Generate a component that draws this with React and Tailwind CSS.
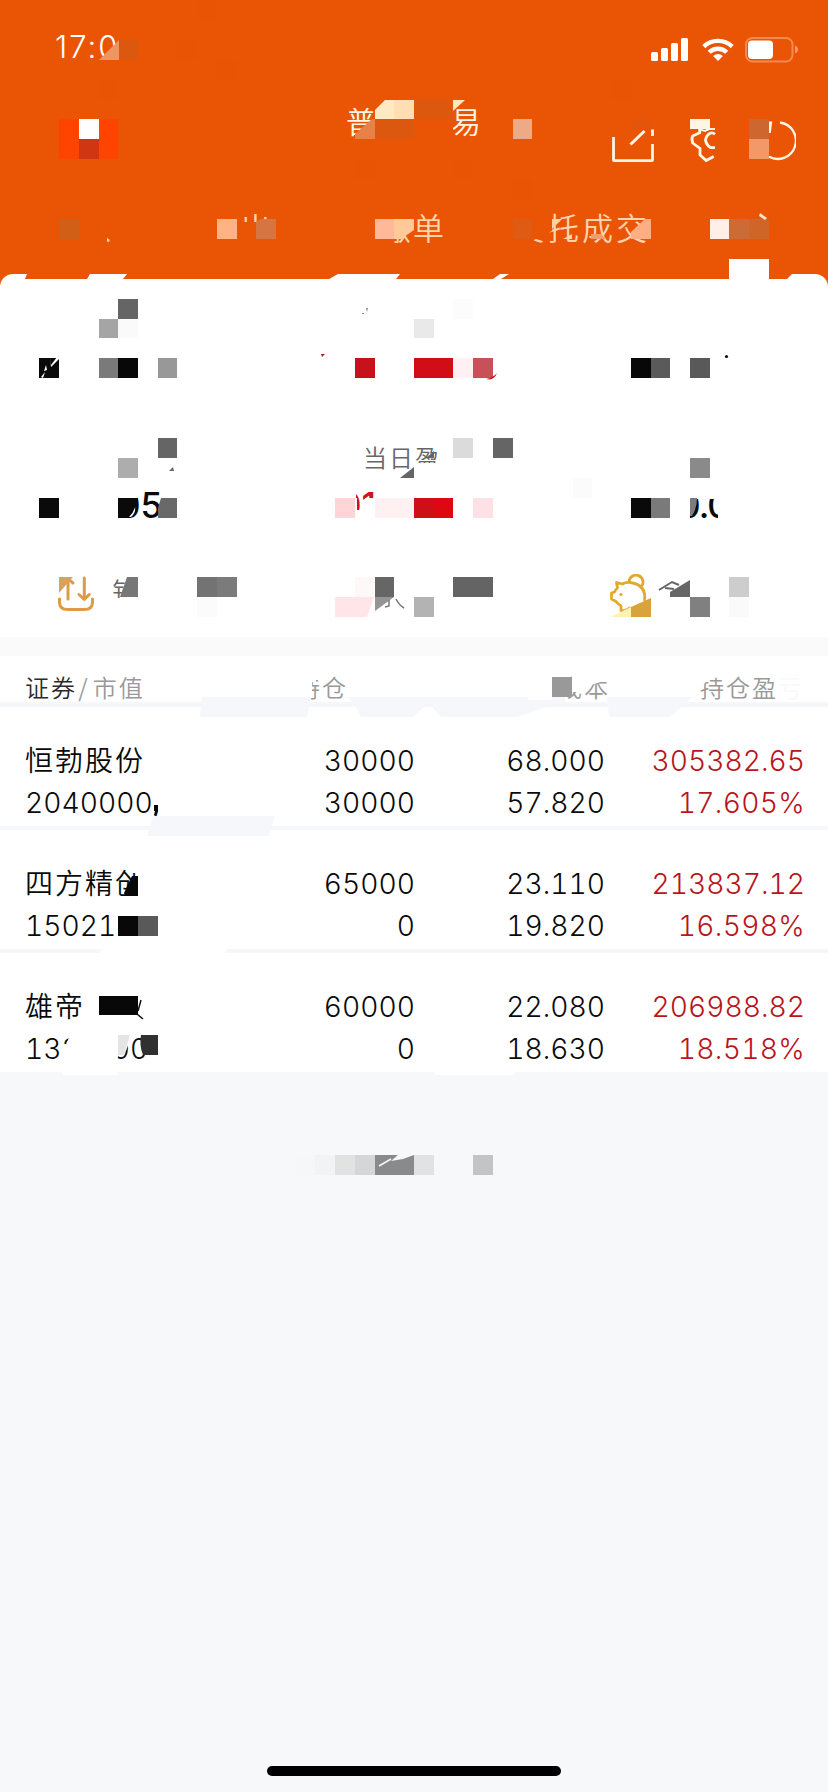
import React from "react";

const holdings = [
  {
    name: "恒勃股份",
    value: "2040000,",
    amount: "30000",
    available: "30000",
    price: "68.000",
    cost: "57.820",
    profit: "305382.65",
    rate: "17.605%",
  },
  {
    name: "四方精创",
    value: "15021",
    amount: "65000",
    available: "0",
    price: "23.110",
    cost: "19.820",
    profit: "213837.12",
    rate: "16.598%",
  },
  {
    name: "雄帝",
    value: "132",
    valueTail: "00",
    amount: "60000",
    available: "0",
    price: "22.080",
    cost: "18.630",
    profit: "206988.82",
    rate: "18.518%",
  },
];

// Privacy tiles: [x, y, width, height, color]
const headerTiles = [
  [197, 0, 20, 20, "#e85404"],
  [177, 40, 20, 20, "#e85404"],
  [118, 40, 20, 20, "#dc580f"],
  [217, 60, 20, 20, "#e85404"],
  [99, 80, 19, 20, "#e85404"],
  [611, 80, 20, 20, "#e85404"],
  [453, 159, 20, 20, "#e85404"],
  [355, 159, 20, 20, "#e85404"],
  [513, 179, 20, 20, "#e85404"],
  [375, 119, 78, 20, "#e95504"],
  [375, 119, 39, 20, "#dc580f"],
  [414, 100, 39, 19, "#dc580f"],
  [394, 100, 20, 19, "#ffdeb4"],
  [59, 119, 59, 40, "#ff4300"],
  [79, 119, 20, 20, "#fffefd"],
  [79, 139, 20, 20, "#d13612"],
  [513, 119, 19, 20, "#eeaa87"],
  [631, 119, 20, 11, "#e4540a"],
  [690, 119, 20, 10, "#fff5e5"],
  [749, 119, 20, 20, "#cd672f"],
  [749, 139, 20, 20, "#f29967"],
  [217, 219, 20, 20, "#ffb384"],
  [375, 219, 19, 20, "#ffb899"],
  [710, 219, 19, 20, "#ffefe6"],
  [729, 219, 20, 20, "#cb6c37"],
  [749, 219, 20, 20, "#cf6529"],
  [729, 259, 40, 20, "#ffffff"],
];

const summaryTiles = [
  [118, 299, 20, 20, "#656565"],
  [99, 319, 19, 19, "#a5a5a5"],
  [118, 319, 20, 19, "#fafafa"],
  [453, 299, 20, 20, "#fcfcfc"],
  [414, 319, 20, 19, "#e9e9e9"],
  [39, 358, 20, 20, "#0a0a0a"],
  [99, 358, 19, 20, "#7a7a7a"],
  [118, 358, 20, 20, "#080808"],
  [158, 358, 19, 20, "#989898"],
  [355, 358, 20, 20, "#c6121b"],
  [414, 358, 39, 20, "#d10d17"],
  [453, 358, 20, 20, "#fff0f3"],
  [473, 358, 20, 20, "#c85058"],
  [631, 358, 20, 20, "#080808"],
  [651, 358, 19, 20, "#5a5a5a"],
  [690, 358, 20, 20, "#595959"],
  [158, 438, 19, 20, "#656565"],
  [118, 458, 20, 20, "#adadad"],
  [453, 438, 20, 20, "#dbdbdb"],
  [493, 438, 20, 20, "#656565"],
  [690, 458, 20, 20, "#8a8a8a"],
  [573, 478, 19, 20, "#fbfbfb"],
  [39, 498, 20, 20, "#0a0a0a"],
  [335, 498, 20, 20, "#ffd5d7"],
  [375, 498, 39, 20, "#fff0f2"],
  [414, 498, 20, 20, "#ce0f18"],
  [434, 498, 19, 20, "#dd0811"],
  [473, 498, 20, 20, "#fee1e4"],
  [631, 498, 20, 20, "#0a0a0a"],
  [651, 498, 19, 20, "#7a7a7a"],
  [197, 577, 20, 20, "#737373"],
  [217, 577, 20, 20, "#7b7b7b"],
  [197, 597, 20, 20, "#fbfbfb"],
  [355, 577, 20, 20, "#fff8f8"],
  [375, 577, 19, 20, "#666666"],
  [453, 577, 40, 20, "#646464"],
  [414, 597, 20, 20, "#b3b3b3"],
  [690, 597, 20, 20, "#808080"],
  [729, 577, 20, 20, "#cdcdcd"],
  [729, 597, 20, 20, "#fafafa"],
];

const holdingTiles = [
  [552, 677, 20, 20, "#999999"],
  [118, 916, 20, 20, "#080808"],
  [138, 916, 20, 20, "#595959"],
  [99, 996, 39, 19, "#080808"],
];

const footerTiles = [
  [296, 1155, 19, 20, "#f6f7f8"],
  [315, 1155, 20, 20, "#f2f3f4"],
  [335, 1155, 20, 20, "#e1e3e2"],
  [355, 1155, 20, 20, "#d5d6d8"],
  [375, 1155, 39, 20, "#8a8a8a"],
  [414, 1155, 20, 20, "#e1e2e3"],
  [473, 1155, 20, 20, "#c3c4c5"],
];

function Mosaic({ top, height, tiles, children }) {
  return (
    <svg
      className="absolute inset-0 pointer-events-none"
      width="828"
      height={height}
      viewBox={`0 ${top} 828 ${height}`}
    >
      {tiles.map(([x, y, w, h, color]) => (
        <rect key={`${x}-${y}-${w}-${color}`} x={x} y={y} width={w} height={h} fill={color} shapeRendering="crispEdges" />
      ))}
      {children}
    </svg>
  );
}

function SignalIcons() {
  return (
    <svg width="150" height="28" viewBox="649 36 150 28" fill="#fff">
      <rect x="650" y="52" width="7" height="9" rx="1.5" />
      <rect x="660" y="48" width="7" height="13" rx="1.5" />
      <rect x="670" y="43" width="7" height="18" rx="1.5" />
      <rect x="680" y="38" width="7" height="23" rx="1.5" />
      <g fill="none" stroke="#fff" strokeWidth="4.4">
        <path d="M702.8 46.6a20.5 20.5 0 0 1 28.4 0" />
        <path d="M708.2 52.3a12.5 12.5 0 0 1 17.6 0" />
      </g>
      <path d="M717 61l-4.9-5a7 7 0 0 1 9.8 0z" />
      <rect x="745" y="38" width="46.500" height="23.500" rx="6.500" fill="none" stroke="#f38a50" strokeWidth="2" />
      <rect x="747" y="40.500" width="25" height="18.500" rx="4" />
      <path d="M794 45.500c4 1.500 4 6.500 0 8z" fill="#f39a66" />
    </svg>
  );
}

function HeaderActions() {
  return (
    <svg width="186" height="46" viewBox="610 118 186 46" fill="none" stroke="#fff5e5" strokeWidth="2.8">
      <path d="M613.500 137v22.500q0 1.200 1.200 1.200h36.600q1.200 0 1.200-1.200V144M652.500 129.500v6.500" />
      <path d="M630.500 144.500l14-13.500" strokeWidth="3" />
      <path d="M699.700 128v4.700l-7 3.300q-1.500 3 0 7l7.300 5.500v6.500l6.200 5.600 7.500-4" />
      <path d="M700 129.500l5 1.500 4-2h6" strokeWidth="2" />
      <path d="M715 134.200q-2-1.800-4.500-1.200-4.500 2.500-5 7 .5 4.500 5 7.700h4.500" />
      <path d="M780 122.500a18.300 18.300 0 1 1-11 34.300" strokeWidth="2.300" />
      <path d="M769 121.500h3.300l-1.500 11.500h-1.800z" fill="#fff5e5" stroke="none" />
    </svg>
  );
}

function TransferIcon() {
  return (
    <svg className="mt-1" width="40" height="38" viewBox="56 576 40 38" fill="none" stroke="#dc9b45" strokeWidth="3" strokeLinecap="round" strokeLinejoin="round">
      <path d="M59.500 599v3q0 7.500 8 7.500h17q8 0 8-7.500v-3" />
      <path d="M68 599v-16M73 583l-5-4M84.300 578v21M79 594.500l5.300 5 5-5" />
      <path d="M59 577h14l-14 16z" fill="#d9a15e" stroke="none" />
    </svg>
  );
}

function PiggyIcon() {
  return (
    <svg className="mt-0.5" width="46" height="44" viewBox="607 574 46 44" fill="none" stroke="#e3a92e" strokeWidth="2.800" strokeLinejoin="round" strokeLinecap="round">
      <path d="M629 582a7 7 0 1 1 12 5" />
      <path d="M644.500 600q2-15-14-17.500-5-.5-8 1.500l-6-1.500 1 5.500q-2 1.500-3 4l-3 1v6l4.500 2.500q2 2.500 5 4.500v4.500l3 .5 6-3" />
      <circle cx="621" cy="594.500" r="1.600" fill="#e3a92e" stroke="none" />
      <path d="M611 617l20-10v10z" fill="#fdf1b4" stroke="none" />
      <path d="M631 607l20-9v19h-20z" fill="#d9a33c" stroke="none" />
    </svg>
  );
}

function Header() {
  return (
    <header className="relative h-[294px] bg-[#e95504] text-white">
      <div className="flex justify-between items-start pt-9 pl-[55px] pr-[28px] h-[82px]">
        <span className="-mt-[6px] font-['Inter'] text-[31px] leading-[34px] tracking-[2px]">17:0</span>
        <SignalIcons />
      </div>
      <div className="flex h-[100px] pt-[18px] pl-[346px]">
        <h1 className="w-[264px] text-[30px] leading-[40px] tracking-[5px] text-[#fff5e5]">普通交易</h1>
        <div className="pt-[18px]">
          <HeaderActions />
        </div>
      </div>
      <nav className="grid grid-cols-[154px_182px_134px_220px_1fr] pl-[44px] pt-[25px] text-[31px] leading-[40px] text-[#ffd3b0] tracking-[2px]">
        <span className="pl-[36px]">入</span>
        <span className="pl-[42px]">出</span>
        <span>撤单</span>
        <span className="tracking-[3px]">委托成交</span>
        <span />
      </nav>
      <Mosaic top={0} height={294} tiles={headerTiles}>
        <path d="M99 60l20-20v20z" fill="#ee9564" />
        <path d="M375 119v-9l10-10h9v19z" fill="#ffe9c3" />
        <path d="M375 139h58v6h-58zM414 119h24v12h-24zM433 119h8v9h-8z" fill="#e95504" />
        <path d="M355 139v-5l17-15h3v20z" fill="#e78147" />
        <path d="M360 139h15v6h-15z" fill="#e95504" />
        <path d="M453 100h12l-12 11z" fill="#ffe7b8" />
        {/* tab bar masking */}
        <path d="M50 205h80v31H50zM50 236h57v12H50zM237 205h45v8h-45zM237 222h45v26h-45z" fill="#e95504" />
        <path d="M59 219h20v20H59z" fill="#d05f18" />
        <path d="M256 222l5-3h15v20h-20z" fill="#d77542" />
        <path d="M375 205h40v14h-40zM375 239h18v8h-18z" fill="#e95504" />
        <path d="M394 219h20v11l-13 9h-7z" fill="#ffca98" />
        <path d="M505 205h39v14h8v12l-18 9h-29zM505 239h29v8h-29z" fill="#e95504" />
        <path d="M513 219h19v20h-19z" fill="#de5b13" />
        <path d="M552 219h10l-10 10zM572 239v-5l-9 5z" fill="#ffd3a8" />
        <path d="M591 234h10l5 5h-15z" fill="#f39b6c" />
        <path d="M631 239v-7l14-13h6v20z" fill="#ffad82" />
        <path d="M760 213l7 5-2 2-6-4z" fill="#ffe2cc" />
      </Mosaic>
    </header>
  );
}

function Summary() {
  return (
    <section className="relative h-[363px] -mt-5 bg-white rounded-t-[13px]">
      <div className="h-[165px]" />
      <p className="pl-[363px] text-[24px] leading-[36px] tracking-[2px] text-[#666]">当日盈</p>
      <div className="grid grid-cols-[221px_342px_1fr] pl-[118px] pt-[7px] h-[77px] font-['Inter'] text-[35px] leading-[46px] font-medium text-[#0a0a0a]">
        <span>05</span>
        <span className="text-[#cf121b]">01</span>
        <span className="-ml-[3px] tracking-[-1px]">0.0</span>
      </div>
      <div className="grid grid-cols-[56px_495px_50px_1fr] pl-[56px] pt-[20px] items-start text-[24px] leading-[30px] text-[#666]">
        <TransferIcon />
        <span className="pt-[3px]">钅</span>
        <PiggyIcon />
        <span />
      </div>
      <Mosaic top={274} height={363} tiles={summaryTiles}>
        {/* jagged upper edge of the sheet */}
        <path d="M27 274h63l-3 5H25zM127 274h211l-9 5H123zM400 274h100l-7 5h-97zM509 274h220v5H501zM769 274h23l-5 5h-18z" fill="#e95504" />
        <path d="M50 356l1 9 6-8h3v1l-9 9zM44 371l2-6 1 5zM41 377l4-5-2 6z" fill="#fff" />
        <path d="M366 308h2l-1 4zM362 313h2v1h-2z" fill="#888" />
        <path d="M321 354h4l-3 3z" fill="#b01820" />
        <path d="M486 379q7-1 11-6-3 8-11 6z" fill="#d10d17" />
        <circle cx="726.500" cy="356.500" r="1.600" fill="#111" />
        <path d="M169 471l4-4 1 4z" fill="#666" />
        <path d="M413 463h26v16h-26z" fill="#fff" />
        <path d="M426 458l8-7v7z" fill="#666" />
        <path d="M400 478l14-11v11z" fill="#656565" />
        {/* leftovers of the masked amounts */}
        <path d="M112 486h26v12h-26z" fill="#fff" />
        <path d="M118 498h20v6q-3 9-9 14h-11z" fill="#0a0a0a" />
        <path d="M129 517q5-5 6-10 1 6-4 10z" fill="#fff" />
        <path d="M158 518v-10l3-10h16v20z" fill="#696969" />
        <path d="M335 488h21v10h-21zM355 498h2v24h-2zM357 510h8v12h-8zM376 488h10v10h-10zM365 498h10v22h-10z" fill="#fff" />
        <path d="M671 486h71v13h-71zM718 498h24v24h-24zM671 498h19v24h-19z" fill="#fff" />
        <path d="M690 498h7q0 10-5 18h-2z" fill="#7d7d7d" />
        <path d="M120 597l7-20h11v20z" fill="#777" />
        <path d="M112 598h26v10h-26z" fill="#fff" />
        <path d="M335 597h39l-7 20h-32z" fill="#ffe5e7" />
        <path d="M375 597h19l-19 14z" fill="#949494" />
        <path d="M389 600v6l-4 1M396 599q3 6 8 9" fill="none" stroke="#777" strokeWidth="1.500" />
        <path d="M659 590l13-8 7 3M665 588l9 1" fill="none" stroke="#666" strokeWidth="2" />
        <path d="M670 597v-5l20-12v17z" fill="#666" />
      </Mosaic>
    </section>
  );
}

function Pair({ top, bottom, className }) {
  return (
    <div className={className}>
      <div>{top}</div>
      <div>{bottom}</div>
    </div>
  );
}

function Holdings() {
  return (
    <section className="relative h-[435px] bg-white">
      <div className="h-[19px] bg-[#fafafa]" />
      <div className="grid grid-cols-[271px_262px_130px_1fr] pl-[25px] h-[46px] text-[24px] leading-[61px] tracking-[2px] text-[#999]">
        <span>
          <span className="text-[#2a2a2a]">证券</span> <span className="-ml-[6px]">/</span>
          <span className="pl-[3px]">市值</span>
        </span>
        <span>持仓</span>
        <span>成本</span>
        <span className="pl-[12px]">
          持仓盈<span className="text-[#f9f9f9]">亏</span>
        </span>
      </div>
      <div className="h-[5px] bg-[#f6f7fa]" />
      {holdings.map((row, i) => (
        <div
          key={row.name}
          className={`grid grid-cols-[200px_190px_190px_1fr] h-[123px] pt-[33px] pl-[25px] pr-[23px] font-['Inter','Noto_Sans_CJK_SC',sans-serif] font-[350] text-[28.200px] leading-[42px] tabular-nums text-[#0a0a0a] ${
            i < holdings.length - 1 ? "border-b-4 border-[#f6f7fa]" : ""
          }`}
        >
          <Pair
            className="-mt-[2px]"
            top={<span className="font-['Noto_Sans_CJK_SC'] text-[28px] tracking-[2px]">{row.name}</span>}
            bottom={
              <>
                {row.value}
                {row.valueTail && <span className="pl-[32px]">{row.valueTail}</span>}
              </>
            }
          />
          <Pair className="text-right" top={row.amount} bottom={row.available} />
          <Pair className="text-right" top={row.price} bottom={row.cost} />
          <Pair
            className="text-right text-[#b8151c]"
            top={row.profit}
            bottom={<span className="tracking-[0.300px]">{row.rate}</span>}
          />
        </div>
      ))}
      <Mosaic top={637} height={435} tiles={holdingTiles}>
        <path d="M202 697h109l-4 20H200zM348 697h212l-14 10-29 10h-76l-9-10h-8l-11 10h-52l-5-10zM607 697h85l-22 20h-61z" fill="#f6f7fa" />
        <path d="M290 670h26v12h-26zM290 682h22v15h-22zM572 670h35v10l-16 5-12 7h-7zM528 670h24v30h-24z" fill="#fff" />
        <path d="M552 697h13v5h-13z" fill="#f6f7fa" />
        <path d="M696 670h26v6l-14 4-8 8h-4z" fill="#fff" />
        <path d="M153 816h122l-6 20H147z" fill="#f6f7fa" />
        <path d="M154 805h4v6l-3 5-1-1 1-4h-1z" fill="#080808" />
        <path d="M138 870h8v30h-8zM125 896h15v5h-15z" fill="#fff" />
        <path d="M125 896l-1-3 8-17h6v20z" fill="#080808" />
        <path d="M102 949h125l-2 4H100z" fill="#fff" />
        <path d="M137 1014l6 5M141 1000l-3 11" fill="none" stroke="#111" strokeWidth="1.500" />
        <path d="M70 1034h48v26H63l3-14z" fill="#fff" />
        <path d="M110 1034h17q4 12-4 21h-13z" fill="#fff" />
        <path d="M118 1035h12l-6 20h-6z" fill="#e5e5e5" />
        <path d="M144 1030h16v30h-14z" fill="#fff" />
        <path d="M141 1035h17v20h-15q-4-10-2-20z" fill="#303030" />
      </Mosaic>
    </section>
  );
}

export default function App() {
  return (
    <div className="w-[828px] h-[1792px] overflow-hidden flex flex-col bg-[#f7f8fa] font-['Noto_Sans_CJK_SC',sans-serif] font-[350]">
      <Header />
      <Summary />
      <Holdings />
      <footer className="relative flex-1 flex flex-col justify-end items-center pb-4">
        <Mosaic top={1072} height={720} tiles={footerTiles}>
          <path d="M62 1072h56v3H63zM434 1072h80v3h-78z" fill="#fff" />
          <path d="M379 1166l12-7" fill="none" stroke="#f7f8fa" strokeWidth="1.500" />
          <path d="M391 1161l7-6h16l-11 4z" fill="#f7f8fa" />
        </Mosaic>
        <div className="w-[294px] h-[10px] rounded-full bg-black" />
      </footer>
    </div>
  );
}
